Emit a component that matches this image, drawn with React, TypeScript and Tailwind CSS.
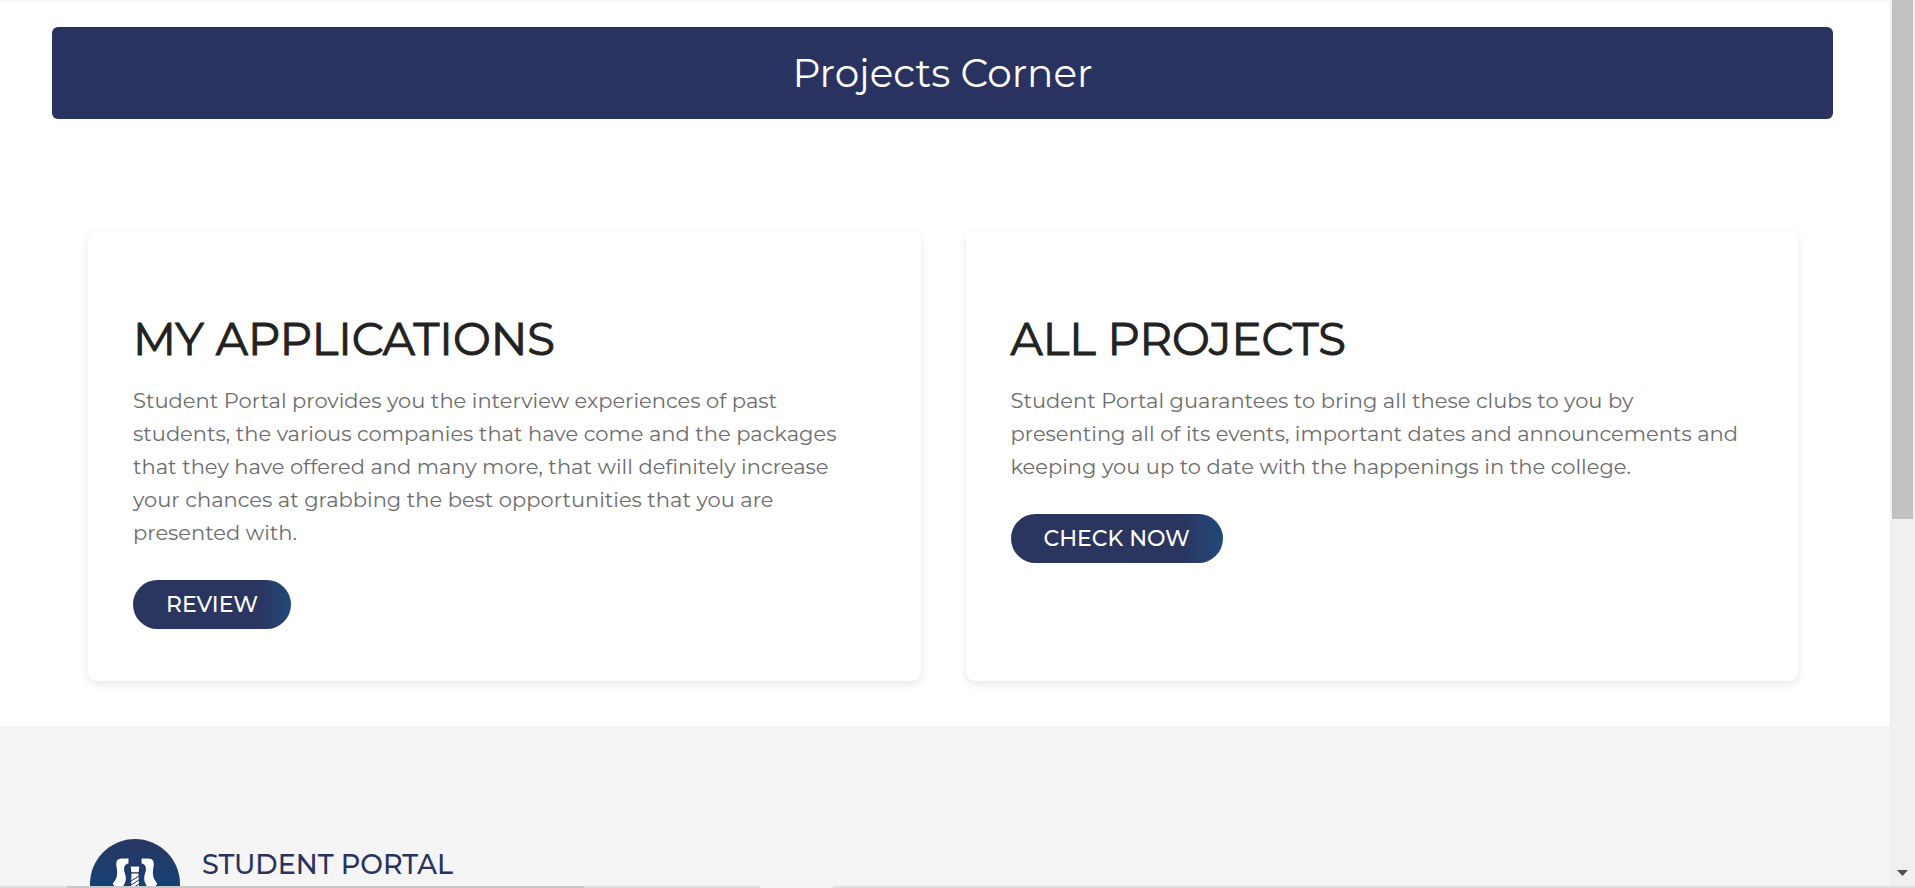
const cards = [
  {
    title: 'MY APPLICATIONS',
    lines: [
      'Student Portal provides you the interview experiences of past',
      'students, the various companies that have come and the packages',
      'that they have offered and many more, that will definitely increase',
      'your chances at grabbing the best opportunities that you are',
      'presented with.',
    ],
    action: 'REVIEW',
  },
  {
    title: 'ALL PROJECTS',
    lines: [
      'Student Portal guarantees to bring all these clubs to you by',
      'presenting all of its events, important dates and announcements and',
      'keeping you up to date with the happenings in the college.',
    ],
    action: 'CHECK NOW',
  },
];

function Card({ title, lines, action }: (typeof cards)[number]) {
  return (
    <article className="flex flex-1 flex-col items-start rounded-[9px] bg-white px-[45px] pt-20 pb-[52px] shadow-[0_3px_10px_rgba(0,0,0,0.1)]">
      <h2 className="text-[45px] leading-[56px] font-normal text-[#222222] [-webkit-text-stroke:1px_#222222]">{title}</h2>
      <p className="mt-[17px] text-[21px] leading-[33px] font-normal text-[#6c6c6c]">
        {lines.map((line) => (
          <span key={line} className="block">{line}</span>
        ))}
      </p>
      <button
        type="button"
        className="mt-[31px] h-[49px] rounded-full bg-linear-to-r from-[#2a3560] from-80% to-[#20497a] px-[33px] text-[22px] leading-[49px] font-medium text-white"
      >
        {action}
      </button>
    </article>
  );
}

function Logo() {
  return (
    <svg viewBox="0 0 90 90" className="size-[90px] shrink-0" role="img" aria-label="Student Portal logo">
      <defs>
        <linearGradient id="disc" x1="0" y1="0" x2="0" y2="1">
          <stop offset="0" stopColor="#2a3763" />
          <stop offset="0.5" stopColor="#144272" />
          <stop offset="1" stopColor="#0f4a78" />
        </linearGradient>
      </defs>
      <circle cx="45" cy="45" r="45" fill="url(#disc)" />
      <g fill="#fff" stroke="#1c2a60" strokeWidth="1">
        <path d="M39 19 H32 C27 19 25 22 26 28 C27 34 27 38 24 42 L22 45 L26 49 V66 H33 V48 C37 43 37 38 35 33 C34 28 35 25 39 25 Z" />
        <path d="M51 19 H58 C63 19 65 22 64 28 C63 34 63 38 66 42 L68 45 L64 49 V66 H57 V48 C53 43 53 38 55 33 C56 28 55 25 51 25 Z" />
        <path d="M40 27 H50 L49 34 H41 Z" />
        <path d="M41 34 H49 L50 60 L45 65 L40 60 Z" />
        <path d="M41 42 L49 37 M41 46 L49 41 M41 50 L49 45" fill="none" />
      </g>
    </svg>
  );
}

export default function App() {
  return (
    <div className="flex h-screen flex-col overflow-hidden bg-white font-['Montserrat','Inter',sans-serif]">
      <div className="flex min-h-0 flex-1">
        <div className="flex min-w-0 flex-1 flex-col">
          <div className="h-[3px] shrink-0 bg-linear-to-b from-[#f5f5f5] to-white" />
          <header className="mt-6 mr-[57px] ml-[52px] flex h-[92px] shrink-0 items-center justify-center rounded-md bg-[#2a3360]">
            <h1 className="text-[39px] leading-[48px] text-white">Projects Corner</h1>
          </header>
          <main className="mt-28 mr-[92px] mb-[45px] ml-[88px] flex shrink-0 gap-[45px]">
            {cards.map((card) => (
              <Card key={card.title} {...card} />
            ))}
          </main>
          <footer className="min-h-0 flex-1 overflow-hidden bg-[#f5f5f5] px-[90px] pt-[113px]">
            <div className="flex items-start gap-[22px]">
              <Logo />
              <h3 className="mt-2 text-[27px] leading-9 font-medium text-[#2a3360]">STUDENT PORTAL</h3>
            </div>
          </footer>
        </div>
        <div className="flex w-[25px] shrink-0 flex-col items-center justify-between bg-[#f0f0f0]" aria-hidden="true">
          <div className="w-[21px] flex-1 bg-[#c1c1c1]" />
          <div className="flex h-[367px] items-end pb-[10px]">
            <svg viewBox="0 0 11 6" className="h-[6px] w-[11px]" fill="#505050">
              <path d="M0 0H11L5.500 6Z" />
            </svg>
          </div>
        </div>
      </div>
      <div className="flex h-[2px] shrink-0 bg-[#dedede]">
        <div className="ml-[67px] w-[27%] bg-[#c8c8c8]" />
        <div className="ml-[176px] w-[73px] bg-[#f3f3f3]" />
      </div>
    </div>
  );
}
